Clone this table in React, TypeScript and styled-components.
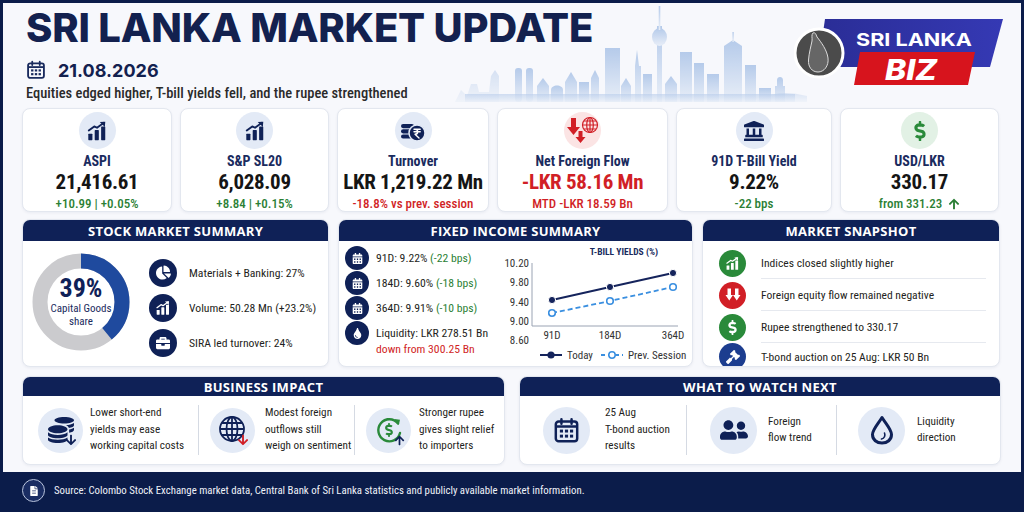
import styled, { createGlobalStyle } from "styled-components";
import {
  FaLandmark,
  FaDollarSign,
  FaChartPie,
  FaBriefcase,
  FaGavel,
  FaCalendarAlt,
  FaUserFriends,
  FaArrowDown,
  FaArrowUp,
  FaFileAlt,
  FaTint,
  FaCoins,
} from "react-icons/fa";

const NAVY = "#0f2157";
const GREEN = "#2b7f35";
const RED = "#d11f26";
const COND = `"Roboto Condensed", "Liberation Sans Narrow", "Roboto", "Liberation Sans", sans-serif`;
const HEAD = `"Inter", "Open Sans", "Liberation Sans", sans-serif`;

const GlobalStyle = createGlobalStyle`
  html, body { margin: 0; padding: 0; background: #fff; }
  body { font-family: ${COND}; }
  * { box-sizing: border-box; }
`;

const Page = styled.div`
  width: 1024px;
  height: 512px;
  border: 3px solid #0b1c4a;
  background: #f7f8fc;
  display: flex;
  flex-direction: column;
  overflow: hidden;
  color: #1d1d1f;
`;

/* ---------- header ---------- */

const Header = styled.header`
  position: relative;
  height: 105px;
  display: flex;
  justify-content: space-between;
  padding: 0 15px 0 23px;
`;

const TitleBlock = styled.div`
  position: relative;
  z-index: 1;
  display: flex;
  flex-direction: column;
  padding-top: 4px;
`;

const Title = styled.h1`
  margin: 0;
  font-family: ${HEAD};
  font-weight: 800;
  font-size: 40px;
  line-height: 42px;
  color: #13214f;
  letter-spacing: -0.2px;
  white-space: nowrap;
`;

const DateRow = styled.div`
  display: flex;
  align-items: center;
  gap: 12px;
  margin-top: 10px;
  height: 22px;
  font-family: ${HEAD};
  font-weight: 700;
  font-size: 18px;
  color: #13214f;
`;

const Subtitle = styled.p`
  margin: 4px 0 0;
  font-size: 14.5px;
  font-weight: 500;
  color: #2a2a2a;
  line-height: 18px;
  white-space: nowrap;
`;

const Skyline = styled.svg`
  position: absolute;
  left: 452px;
  top: 1px;
`;

const Logo = styled.svg`
  margin-top: 14px;
  position: relative;
  z-index: 1;
`;

/* ---------- stat cards ---------- */

const StatsRow = styled.section`
  display: grid;
  grid-template-columns: 150px 149px 152px 171px 156px 159px;
  gap: 8px;
  height: 102px;
  padding-left: 19px;
`;

const Card = styled.div`
  background: #fff;
  border: 1px solid #e3e7ef;
  border-radius: 8px;
  box-shadow: 0 1px 3px rgba(20, 40, 90, 0.06);
`;

const StatCard = styled(Card)`
  display: flex;
  flex-direction: column;
  align-items: center;
  padding-top: 3px;
`;

const IconCircle = styled.div<{ $size: number; $bg: string; $color?: string }>`
  position: relative;
  flex: none;
  width: ${(p) => p.$size}px;
  height: ${(p) => p.$size}px;
  border-radius: 50%;
  background: ${(p) => p.$bg};
  color: ${(p) => p.$color || "#fff"};
  display: flex;
  align-items: center;
  justify-content: center;
`;

const Badge = styled.span<{ $color: string }>`
  position: absolute;
  right: 6px;
  bottom: 7px;
  color: ${(p) => p.$color};
  display: flex;
`;

const StatLabel = styled.div`
  margin-top: 4px;
  font-size: 14px;
  font-weight: 700;
  line-height: 16px;
  color: #1a2b5e;
  white-space: nowrap;
`;

const StatValue = styled.div<{ $color?: string }>`
  margin-top: 1px;
  font-size: 21px;
  font-weight: 700;
  line-height: 24px;
  letter-spacing: -0.3px;
  color: ${(p) => p.$color || "#151515"};
  white-space: nowrap;
`;

const StatChange = styled.div<{ $color: string }>`
  margin-top: 3px;
  display: flex;
  align-items: center;
  gap: 6px;
  font-size: 13px;
  font-weight: 500;
  line-height: 14px;
  color: ${(p) => p.$color};
  white-space: nowrap;
`;

/* ---------- panels ---------- */

const Row = styled.section<{ $cols: string; $h: number; $gap: number }>`
  display: grid;
  grid-template-columns: ${(p) => p.$cols};
  column-gap: ${(p) => p.$gap}px;
  height: ${(p) => p.$h}px;
  margin-top: 9px;
  padding-left: 19px;
`;

const Panel = styled(Card)`
  display: flex;
  flex-direction: column;
  overflow: hidden;
`;

const PanelHeader = styled.div<{ $h: number }>`
  flex: none;
  height: ${(p) => p.$h}px;
  background: ${NAVY};
  color: #fff;
  font-family: "Open Sans", ${HEAD};
  font-weight: 700;
  font-size: 13px;
  letter-spacing: 0.3px;
  display: flex;
  align-items: center;
  justify-content: center;
`;

/* stock market summary */

const StockBody = styled.div`
  flex: 1;
  display: flex;
  align-items: center;
  gap: 19px;
  padding: 0 0 4px 9px;
`;

const DonutWrap = styled.div`
  display: grid;
  width: 98px;
  height: 98px;
  place-items: center;
  & > * {
    grid-area: 1 / 1;
  }
`;

const DonutText = styled.div`
  display: flex;
  flex-direction: column;
  align-items: center;
  color: #1a2b5e;
  font-size: 11px;
  line-height: 13px;
`;

const DonutPct = styled.span`
  font-size: 26px;
  font-weight: 700;
  line-height: 27px;
  color: ${NAVY};
`;

const ItemList = styled.div<{ $gap: number; $top?: number }>`
  display: flex;
  flex-direction: column;
  gap: ${(p) => p.$gap}px;
  padding-top: ${(p) => p.$top || 0}px;
`;

const ListItem = styled.div<{ $gap: number; $top?: boolean }>`
  display: flex;
  align-items: ${(p) => (p.$top ? "flex-start" : "center")};
  gap: ${(p) => p.$gap}px;
  font-size: 11.7px;
  line-height: 16px;
  color: #1f1f22;
  white-space: nowrap;
`;

const ItemText = styled.span<{ $pad?: number }>`
  padding-top: ${(p) => p.$pad || 0}px;
`;

/* fixed income */

const FixedBody = styled.div`
  flex: 1;
  display: flex;
  justify-content: space-between;
  padding: 5px 2px 0 6px;
`;

const Delta = styled.span<{ $color: string }>`
  color: ${(p) => p.$color};
`;

const Chart = styled.svg`
  margin-top: -2px;
  flex: none;
`;

/* snapshot */

const SnapBody = styled.div`
  flex: 1;
  display: flex;
  flex-direction: column;
  padding: 6px 13px 0 16px;
`;

const SnapRow = styled.div<{ $last?: boolean }>`
  display: flex;
  align-items: center;
  gap: 15px;
  height: ${(p) => (p.$last ? "auto" : "32px")};
  flex: ${(p) => (p.$last ? 1 : "none")};
`;

const SnapText = styled.div<{ $last?: boolean }>`
  flex: 1;
  align-self: stretch;
  display: flex;
  align-items: center;
  font-size: 11.6px;
  color: #1f1f22;
  border-bottom: ${(p) => (p.$last ? "none" : "1px solid #e6e9ef")};
`;

/* bottom panels */

const StripBody = styled.div`
  flex: 1;
  display: flex;
  align-items: center;
`;

const StripItem = styled.div<{ $w?: number; $pad: number; $gap: number }>`
  display: flex;
  align-items: center;
  width: ${(p) => (p.$w ? `${p.$w}px` : "auto")};
  flex: ${(p) => (p.$w ? "none" : 1)};
  padding-left: ${(p) => p.$pad}px;
  gap: ${(p) => p.$gap}px;
  font-size: 11.2px;
  line-height: 16.5px;
  color: #1f1f22;
  white-space: nowrap;
`;

const Divider = styled.div`
  width: 1px;
  height: 50px;
  background: #d5dae3;
  flex: none;
`;

/* footer */

const Footer = styled.footer`
  margin-top: auto;
  height: 37px;
  background: #0b1c4a;
  display: flex;
  align-items: center;
  gap: 9px;
  padding-left: 19px;
  color: #eef1f8;
  font-size: 10.8px;
  white-space: nowrap;
`;

const FooterIcon = styled.div`
  width: 23px;
  height: 23px;
  border-radius: 50%;
  border: 1.5px solid #b9c4dc;
  background: #1a2d63;
  display: flex;
  align-items: center;
  justify-content: center;
  color: #fff;
`;

/* ---------- drawings ---------- */

const BarsUp = ({ c, s }: { c: string; s: number }) => (
  <svg width={s} height={s} viewBox="0 0 24 24">
    <rect x="2.5" y="15" width="4.5" height="7" rx="0.6" fill={c} />
    <rect x="9.5" y="11" width="4.5" height="11" rx="0.6" fill={c} />
    <rect x="16.5" y="7" width="4.5" height="15" rx="0.6" fill={c} />
    <path d="M3 11.5 L9 7 L12 8.5 L19.5 3" stroke={c} strokeWidth="2" fill="none" strokeLinecap="round" strokeLinejoin="round" />
    <path d="M15 2.2 L21 1.8 L20.6 7.6 Z" fill={c} />
  </svg>
);

const CoinsRupee = () => (
  <svg width="26" height="24" viewBox="0 0 26 24">
    <rect x="1" y="5" width="13" height="4.2" rx="2.1" fill={NAVY} />
    <rect x="1" y="10.2" width="13" height="4.2" rx="2.1" fill={NAVY} />
    <rect x="1" y="15.4" width="13" height="4.2" rx="2.1" fill={NAVY} />
    <circle cx="17" cy="14" r="8" fill={NAVY} stroke="#e3eaf6" strokeWidth="1.5" />
    <path d="M14 10.3 H20.2 M14 12.7 H20.2 M15 10.3 C18.6 10.3 18.6 15.3 15 15.3 L19 19" stroke="#fff" strokeWidth="1.4" fill="none" strokeLinecap="round" strokeLinejoin="round" />
  </svg>
);

const FlowDown = () => (
  <svg width="34" height="30" viewBox="0 0 34 30">
    <path d="M5 2 H10 V11 H14 L7.5 19 L1 11 H5 Z" fill={RED} />
    <path d="M12.5 15 H16.5 V21 H19.5 L14.5 27 L9.5 21 H12.5 Z" fill={RED} />
    <g stroke={RED} strokeWidth="1.2" fill="none">
      <circle cx="24" cy="9" r="7.5" />
      <ellipse cx="24" cy="9" rx="3.3" ry="7.5" />
      <path d="M16.5 9 H31.5 M18 5 H30 M18 13 H30 M24 1.5 V16.5" />
    </g>
  </svg>
);

const DoubleDown = () => (
  <svg width="16" height="16" viewBox="0 0 16 16">
    <path d="M2.5 1.5 H6 V8 H8 L4.25 13.5 L0.5 8 H2.5 Z" fill="#fff" />
    <path d="M10 1.5 H13.5 V8 H15.5 L11.75 13.5 L8 8 H10 Z" fill="#fff" />
  </svg>
);

const GlobeLines = () => (
  <svg width="30" height="30" viewBox="0 0 30 30">
    <g stroke={NAVY} strokeWidth="1.8" fill="none">
      <circle cx="14" cy="14" r="12" />
      <ellipse cx="14" cy="14" rx="5.5" ry="12" />
      <path d="M2 14 H26 M4 8 H24 M4 20 H24 M14 2 V26" />
    </g>
  </svg>
);

const DollarCycle = () => (
  <svg width="30" height="30" viewBox="0 0 30 30">
    <path d="M24 8.5 A11 11 0 1 0 26 18" stroke="#2a8a3a" strokeWidth="2.4" fill="none" strokeLinecap="round" />
    <path d="M20.5 4 L26 4.8 L24.8 10 Z" fill="#2a8a3a" />
    <path d="M14 3 V5" stroke="#2a8a3a" strokeWidth="2.4" />
  </svg>
);

const CalendarGrid = ({ s, c }: { s: number; c: string }) => (
  <svg width={s} height={s} viewBox="0 0 24 24">
    <rect x="2.5" y="4" width="19" height="17.5" rx="2.5" stroke={c} strokeWidth="2.2" fill="none" />
    <path d="M2.5 8.5 H21.5" stroke={c} strokeWidth="2.2" />
    <path d="M7.5 2 V6 M16.5 2 V6" stroke={c} strokeWidth="2.2" strokeLinecap="round" />
    {[7.5, 12, 16.5].map((x) =>
      [12.5, 17].map((y) => <rect key={`${x}-${y}`} x={x - 1.4} y={y - 1.3} width="2.8" height="2.6" fill={c} />)
    )}
  </svg>
);

const DropOutline = () => (
  <svg width="26" height="30" viewBox="0 0 26 30">
    <path d="M13 2.5 C17 9 22.5 14.5 22.5 19.5 C22.5 24.8 18.3 28 13 28 C7.7 28 3.5 24.8 3.5 19.5 C3.5 14.5 9 9 13 2.5 Z" stroke={NAVY} strokeWidth="3" fill="none" strokeLinejoin="round" />
    <path d="M15.5 18 C16.5 20.5 15.5 23.5 12.5 24" stroke={NAVY} strokeWidth="1.6" fill="none" strokeLinecap="round" />
  </svg>
);

const SkylineArt = () => (
  <Skyline width="352" height="100" viewBox="0 0 352 100">
    <defs>
      <linearGradient id="sky" x1="0" y1="0" x2="0" y2="1">
        <stop offset="0" stopColor="#9ab8e3" />
        <stop offset="1" stopColor="#e3ebf7" />
      </linearGradient>
    </defs>
    <g fill="url(#sky)" opacity="0.7">
      <path d="M0 98 L6 86 L12 92 L16 80 L22 80 L24 88 L34 88 L36 72 L40 66 L44 72 L44 98 Z" opacity="0.5" />
      <rect x="60" y="64" width="7" height="34" rx="3" />
      <rect x="71" y="64" width="7" height="34" rx="3" />
      <path d="M82 98 V82 L88 74 L94 82 V98 Z" />
      <path d="M96 98 V86 C96 80 108 80 108 86 V98 Z" />
      <path d="M110 98 V78 L116 68 L122 78 V98 Z" />
      <rect x="124" y="78" width="10" height="20" />
      <path d="M136 98 V74 L140 66 L144 74 V98 Z" />
      <rect x="150" y="44" width="15" height="54" />
      <path d="M166 98 V82 L171 74 L176 82 V98 Z" />
      <path d="M180 98 V62 L182 46 L184 62 H186 V98 Z" />
      <rect x="188" y="70" width="9" height="28" />
      <rect x="202" y="22" width="5" height="76" />
      <ellipse cx="204.5" cy="33" rx="7.5" ry="9" />
      <rect x="203.7" y="2" width="1.6" height="24" />
      <path d="M210 98 V80 L216 72 L222 80 V98 Z" />
      <rect x="225" y="48" width="12" height="50" />
      <rect x="239" y="59" width="10" height="39" />
      <rect x="252" y="70" width="12" height="28" />
      <path d="M269 98 V42 L278 36 L287 42 V98 Z" />
      <rect x="277.4" y="28" width="1.4" height="10" />
      <rect x="290" y="61" width="11" height="37" />
      <rect x="304" y="84" width="12" height="14" />
      <path d="M320 98 V82 H322 V76 C322 72 328 72 328 76 V82 H330 V98 Z" />
      <rect x="10" y="90" width="330" height="8" opacity="0.6" />
      <path d="M300 98 Q320 84 352 92 L352 98 Z" opacity="0.4" />
    </g>
  </Skyline>
);

const LogoArt = () => (
  <Logo width="212" height="70" viewBox="0 0 212 70">
    <defs>
      <linearGradient id="blue" x1="0" y1="0" x2="1" y2="0">
        <stop offset="0" stopColor="#2a2d96" />
        <stop offset="1" stopColor="#3539b4" />
      </linearGradient>
    </defs>
    <polygon points="31,2 209,2 196,50 24,50" fill="url(#blue)" />
    <polygon points="66,35 181,35 174,68 60,68" fill="#d7141d" />
    <circle cx="25" cy="36" r="24" fill="#4b4b4b" stroke="#fff" strokeWidth="3" />
    <path d="M19 16 C21 15 22 17 23 20 C27 25 33 33 34 41 C35 49 30 55 24 55 C18 55 14 50 14.5 43 C15 36 17 29 18 24 C18.5 21 17 18 19 16 Z" fill="#666" stroke="#dcdcdc" strokeWidth="1" />
    <text x="120" y="29" textAnchor="middle" fill="#fff" fontFamily="Inter, sans-serif" fontWeight="700" fontSize="18" textLength="116" lengthAdjust="spacingAndGlyphs">
      SRI LANKA
    </text>
    <text x="117" y="63" textAnchor="middle" fill="#fff" fontFamily="Inter, sans-serif" fontWeight="800" fontStyle="italic" fontSize="29" textLength="52" lengthAdjust="spacingAndGlyphs">
      BIZ
    </text>
  </Logo>
);

const YieldChart = () => {
  const today = [
    [52, 56],
    [110, 43],
    [173, 29],
  ];
  const prev = [
    [52, 69],
    [110, 57],
    [173, 43],
  ];
  const ticks = ["10.20", "9.80", "9.40", "9.00", "8.60"];
  const font = { fontFamily: COND };
  return (
    <Chart width="190" height="120" viewBox="0 0 190 120" style={font}>
      <text x="124" y="11" textAnchor="middle" fontSize="9.5" fontWeight="700" fill="#1a2b5e">
        T-BILL YIELDS (%)
      </text>
      {ticks.map((t, i) => (
        <text key={t} x="29" y={23 + i * 19.3} textAnchor="end" fontSize="11" fill="#333">
          {t}
        </text>
      ))}
      <path d="M32 19 V82 H178" stroke="#9aa3b3" strokeWidth="1" fill="none" />
      {["91D", "184D", "364D"].map((t, i) => (
        <text key={t} x={today[i][0]} y="95" textAnchor="middle" fontSize="11" fill="#333">
          {t}
        </text>
      ))}
      <polyline points={prev.map((p) => p.join(",")).join(" ")} stroke="#3a8fe0" strokeWidth="1.8" strokeDasharray="5 3" fill="none" />
      {prev.map(([x, y]) => (
        <circle key={x} cx={x} cy={y} r="3.3" fill="#fff" stroke="#3a8fe0" strokeWidth="1.6" />
      ))}
      <polyline points={today.map((p) => p.join(",")).join(" ")} stroke="#15245c" strokeWidth="2" fill="none" />
      {today.map(([x, y]) => (
        <circle key={x} cx={x} cy={y} r="3.6" fill="#15245c" stroke="#fff" strokeWidth="1" />
      ))}
      <path d="M40 111 H62" stroke="#15245c" strokeWidth="2" />
      <circle cx="51" cy="111" r="3.6" fill="#15245c" />
      <text x="67" y="115" fontSize="11" fill="#333">
        Today
      </text>
      <path d="M101 111 H123" stroke="#3a8fe0" strokeWidth="1.8" strokeDasharray="4 3" />
      <circle cx="112" cy="111" r="3.2" fill="#fff" stroke="#3a8fe0" strokeWidth="1.5" />
      <text x="128" y="115" fontSize="11" fill="#333">
        Prev. Session
      </text>
    </Chart>
  );
};

/* ---------- data ---------- */

const LIGHT = "#e3eaf6";

const stats = [
  { label: "ASPI", value: "21,416.61", change: "+10.99 | +0.05%", color: GREEN, bg: LIGHT, icon: <BarsUp c={NAVY} s={22} /> },
  { label: "S&P SL20", value: "6,028.09", change: "+8.84 | +0.15%", color: GREEN, bg: LIGHT, icon: <BarsUp c={NAVY} s={22} /> },
  { label: "Turnover", value: "LKR 1,219.22 Mn", change: "-18.8% vs prev. session", color: RED, bg: LIGHT, icon: <CoinsRupee /> },
  { label: "Net Foreign Flow", value: "-LKR 58.16 Mn", valueColor: RED, change: "MTD -LKR 18.59 Bn", color: RED, bg: "#fbe4e4", icon: <FlowDown /> },
  { label: "91D T-Bill Yield", value: "9.22%", change: "-22 bps", color: GREEN, bg: LIGHT, icon: <FaLandmark size={20} color={NAVY} /> },
  { label: "USD/LKR", value: "330.17", change: "from 331.23", color: GREEN, bg: "#e2f1e5", icon: <FaDollarSign size={20} color="#2a8a3a" />, up: true },
];

const stockItems = [
  { icon: <FaChartPie size={15} />, text: "Materials + Banking: 27%" },
  { icon: <BarsUp c="#fff" s={16} />, text: "Volume: 50.28 Mn (+23.2%)" },
  { icon: <FaBriefcase size={14} />, text: "SIRA led turnover: 24%" },
];

const fixedItems = [
  { text: "91D: 9.22%", delta: "(-22 bps)" },
  { text: "184D: 9.60%", delta: "(-18 bps)" },
  { text: "364D: 9.91%", delta: "(-10 bps)" },
];

const snapItems = [
  { bg: "#2a8a3a", icon: <BarsUp c="#fff" s={15} />, text: "Indices closed slightly higher" },
  { bg: "#d11f26", icon: <DoubleDown />, text: "Foreign equity flow remained negative" },
  { bg: "#2a8a3a", icon: <FaDollarSign size={15} />, text: "Rupee strengthened to 330.17" },
  { bg: "#1c3d8f", icon: <FaGavel size={14} />, text: "T-bond auction on 25 Aug: LKR 50 Bn" },
];

export default function App() {
  return (
    <>
      <GlobalStyle />
      <Page>
        <Header>
          <SkylineArt />
          <TitleBlock>
            <Title>SRI LANKA MARKET UPDATE</Title>
            <DateRow>
              <CalendarGrid s={20} c="#1a2b5e" />
              21.08.2026
            </DateRow>
            <Subtitle>Equities edged higher, T-bill yields fell, and the rupee strengthened</Subtitle>
          </TitleBlock>
          <LogoArt />
        </Header>

        <StatsRow>
          {stats.map((s) => (
            <StatCard key={s.label}>
              <IconCircle $size={37} $bg={s.bg}>
                {s.icon}
              </IconCircle>
              <StatLabel>{s.label}</StatLabel>
              <StatValue $color={s.valueColor}>{s.value}</StatValue>
              <StatChange $color={s.color}>
                {s.change}
                {s.up && <FaArrowUp size={12} />}
              </StatChange>
            </StatCard>
          ))}
        </StatsRow>

        <Row $cols="307px 355px 298px" $h={148} $gap={9}>
          <Panel>
            <PanelHeader $h={21}>STOCK MARKET SUMMARY</PanelHeader>
            <StockBody>
              <DonutWrap>
                <svg width="98" height="98" viewBox="0 0 98 98">
                  <circle cx="49" cy="49" r="41" stroke="#cbcbce" strokeWidth="15" fill="none" />
                  <circle
                    cx="49"
                    cy="49"
                    r="41"
                    stroke="#1f4a9e"
                    strokeWidth="15"
                    fill="none"
                    strokeDasharray={`${0.39 * 2 * Math.PI * 41} 300`}
                    transform="rotate(-90 49 49)"
                  />
                </svg>
                <DonutText>
                  <DonutPct>39%</DonutPct>
                  <span>Capital Goods</span>
                  <span>share</span>
                </DonutText>
              </DonutWrap>
              <ItemList $gap={7} $top={12}>
                {stockItems.map((it) => (
                  <ListItem key={it.text} $gap={12}>
                    <IconCircle $size={28} $bg={NAVY}>
                      {it.icon}
                    </IconCircle>
                    {it.text}
                  </ListItem>
                ))}
              </ItemList>
            </StockBody>
          </Panel>

          <Panel>
            <PanelHeader $h={21}>FIXED INCOME SUMMARY</PanelHeader>
            <FixedBody>
              <ItemList $gap={1}>
                {fixedItems.map((it) => (
                  <ListItem key={it.text} $gap={7}>
                    <IconCircle $size={24} $bg={NAVY}>
                      <FaCalendarAlt size={11} />
                    </IconCircle>
                    <span>
                      {it.text} <Delta $color={GREEN}>{it.delta}</Delta>
                    </span>
                  </ListItem>
                ))}
                <ListItem $gap={7} $top>
                  <IconCircle $size={24} $bg={NAVY}>
                    <FaTint size={11} />
                  </IconCircle>
                  <ItemText $pad={4}>
                    Liquidity: LKR 278.51 Bn
                    <br />
                    <Delta $color={RED}>down from 300.25 Bn</Delta>
                  </ItemText>
                </ListItem>
              </ItemList>
              <YieldChart />
            </FixedBody>
          </Panel>

          <Panel>
            <PanelHeader $h={21}>MARKET SNAPSHOT</PanelHeader>
            <SnapBody>
              {snapItems.map((it, i) => (
                <SnapRow key={it.text} $last={i === snapItems.length - 1}>
                  <IconCircle $size={27} $bg={it.bg}>
                    {it.icon}
                  </IconCircle>
                  <SnapText $last={i === snapItems.length - 1}>{it.text}</SnapText>
                </SnapRow>
              ))}
            </SnapBody>
          </Panel>
        </Row>

        <Row $cols="483px 482px" $h={89} $gap={14}>
          <Panel>
            <PanelHeader $h={19}>BUSINESS IMPACT</PanelHeader>
            <StripBody>
              <StripItem $w={175} $pad={15} $gap={7}>
                <IconCircle $size={45} $bg={LIGHT} $color={NAVY}>
                  <FaCoins size={26} />
                  <Badge $color={NAVY}>
                    <FaArrowDown size={12} />
                  </Badge>
                </IconCircle>
                <span>
                  Lower short-end
                  <br />
                  yields may ease
                  <br />
                  working capital costs
                </span>
              </StripItem>
              <Divider />
              <StripItem $w={155} $pad={11} $gap={10}>
                <IconCircle $size={45} $bg={LIGHT}>
                  <GlobeLines />
                  <Badge $color={RED}>
                    <FaArrowDown size={12} />
                  </Badge>
                </IconCircle>
                <span>
                  Modest foreign
                  <br />
                  outflows still
                  <br />
                  weigh on sentiment
                </span>
              </StripItem>
              <Divider />
              <StripItem $pad={11} $gap={8}>
                <IconCircle $size={45} $bg={LIGHT} $color="#2a8a3a">
                  <DollarCycle />
                  <FaDollarSign size={14} style={{ position: "absolute" }} />
                  <Badge $color={NAVY}>
                    <FaArrowUp size={11} />
                  </Badge>
                </IconCircle>
                <span>
                  Stronger rupee
                  <br />
                  gives slight relief
                  <br />
                  to importers
                </span>
              </StripItem>
            </StripBody>
          </Panel>

          <Panel>
            <PanelHeader $h={19}>WHAT TO WATCH NEXT</PanelHeader>
            <StripBody>
              <StripItem $w={166} $pad={23} $gap={15}>
                <IconCircle $size={47} $bg={LIGHT}>
                  <CalendarGrid s={27} c={NAVY} />
                </IconCircle>
                <span>
                  25 Aug
                  <br />
                  T-bond auction
                  <br />
                  results
                </span>
              </StripItem>
              <Divider />
              <StripItem $w={149} $pad={23} $gap={11}>
                <IconCircle $size={47} $bg={LIGHT} $color={NAVY}>
                  <FaUserFriends size={28} />
                </IconCircle>
                <span>
                  Foreign
                  <br />
                  flow trend
                </span>
              </StripItem>
              <Divider />
              <StripItem $pad={21} $gap={12}>
                <IconCircle $size={47} $bg={LIGHT}>
                  <DropOutline />
                </IconCircle>
                <span>
                  Liquidity
                  <br />
                  direction
                </span>
              </StripItem>
            </StripBody>
          </Panel>
        </Row>

        <Footer>
          <FooterIcon>
            <FaFileAlt size={10} />
          </FooterIcon>
          Source: Colombo Stock Exchange market data, Central Bank of Sri Lanka statistics and publicly available market information.
        </Footer>
      </Page>
    </>
  );
}
